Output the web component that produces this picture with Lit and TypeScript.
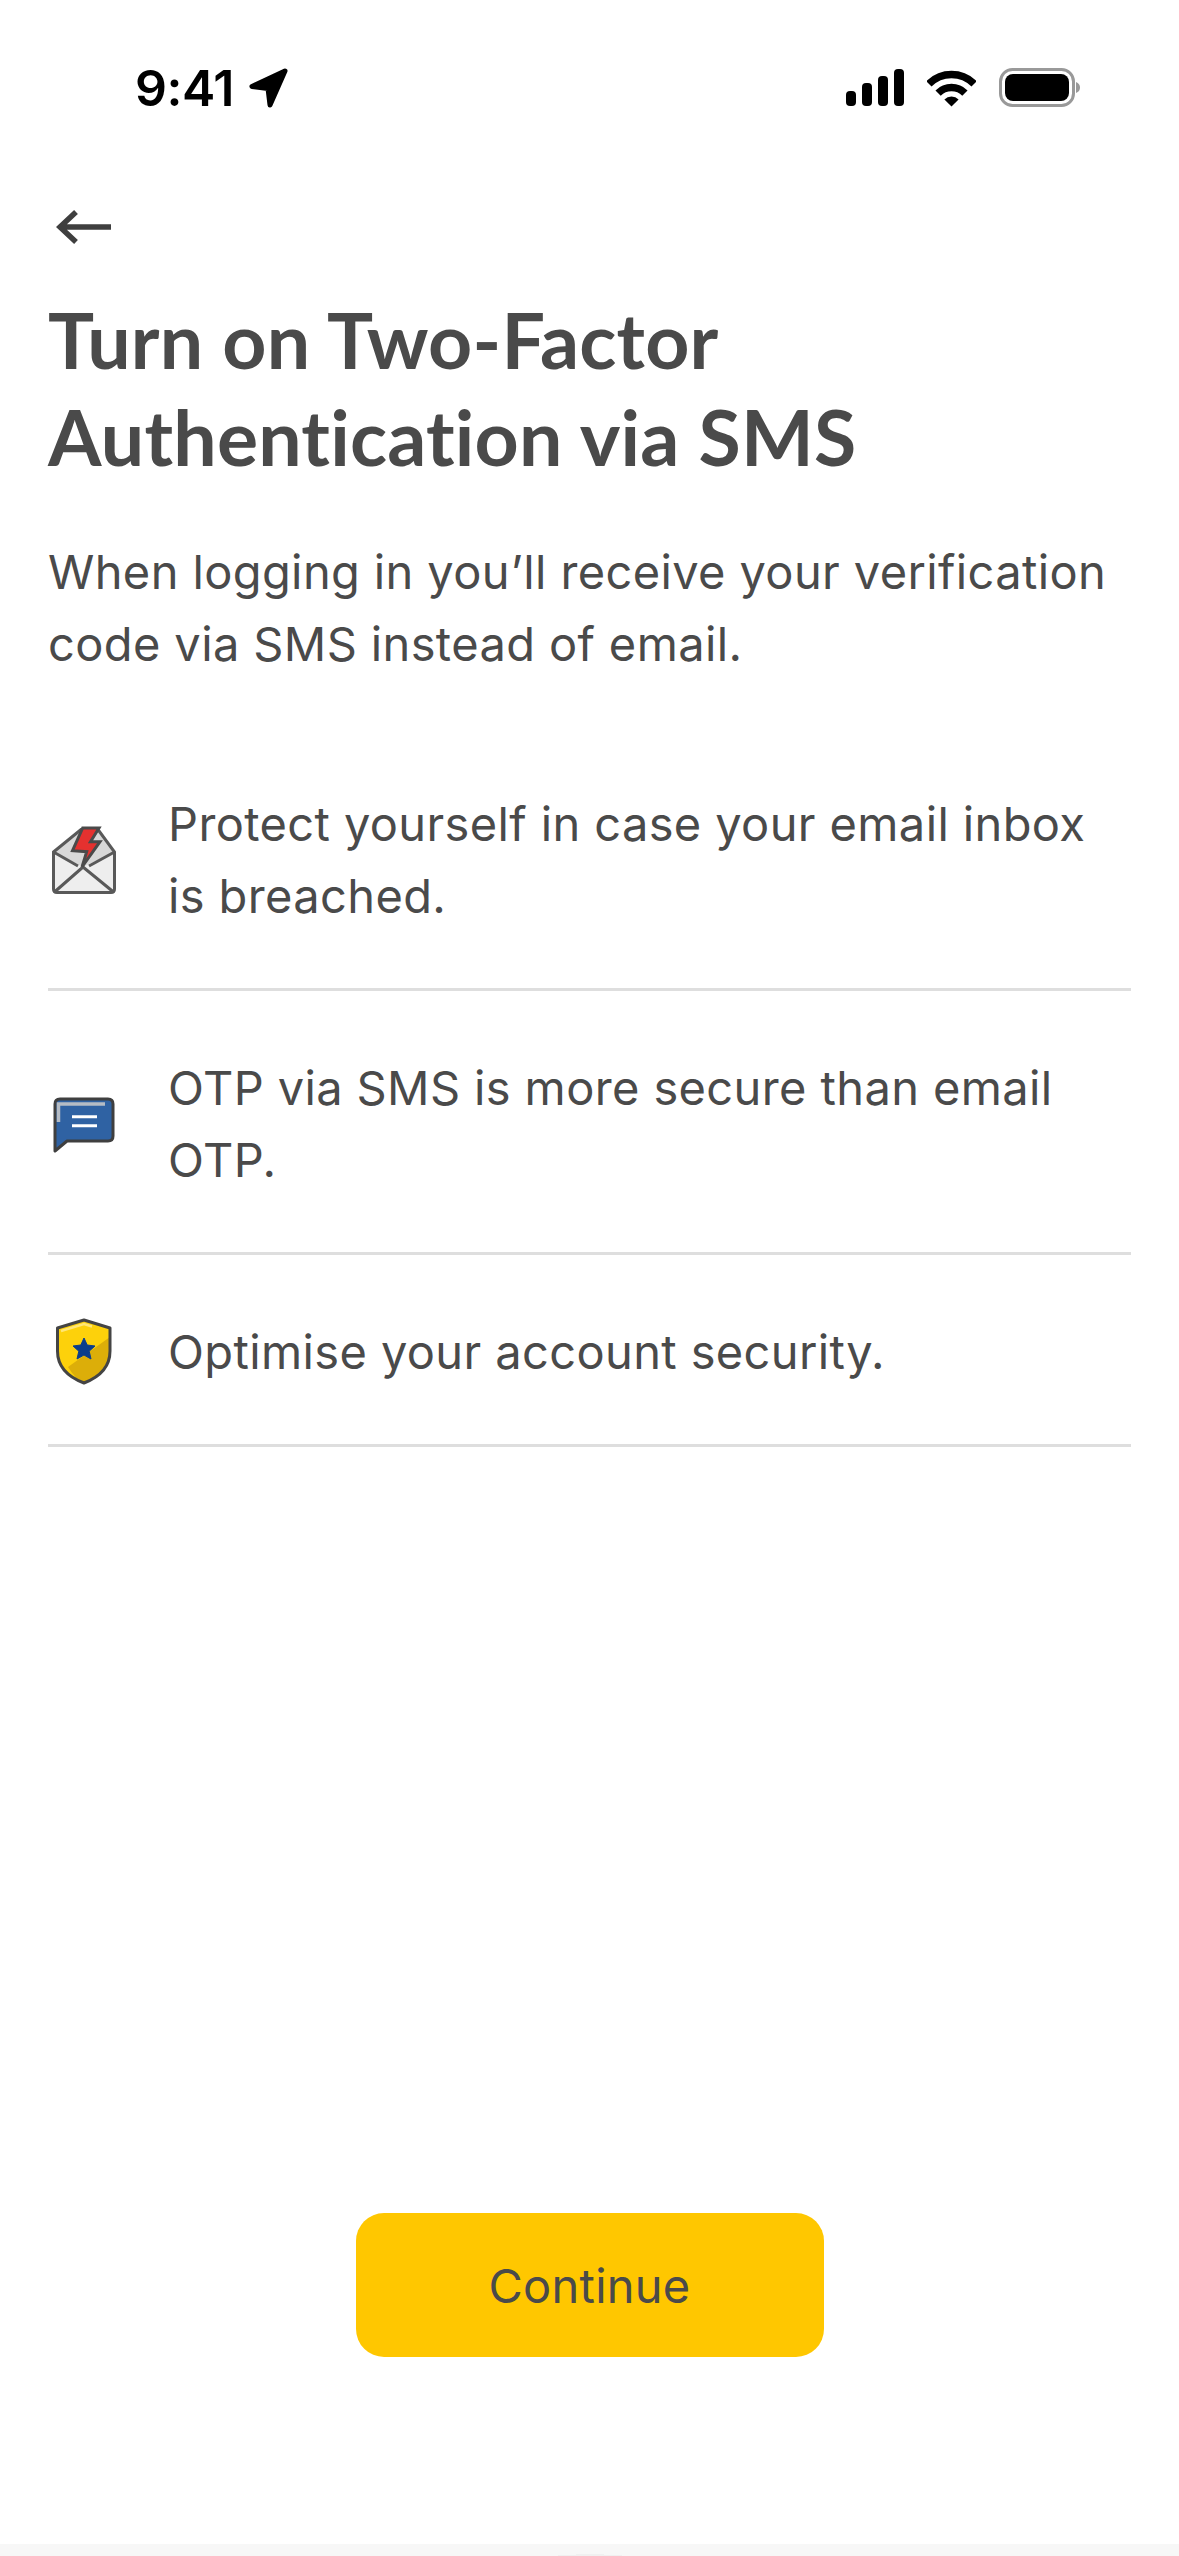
import { LitElement, html, css } from "lit";
import { customElement } from "lit/decorators.js";

@customElement("app-root")
export class AppRoot extends LitElement {
  static styles = css`
    :host { display: block; width: 1179px; height: 2556px; background: #fff; overflow: hidden; color: #4a4a4a; font-family: Inter, "Liberation Sans", sans-serif; }
    .page { height: 2556px; display: flex; flex-direction: column; }
    .status { height: 176px; flex: none; display: flex; justify-content: space-between; align-items: flex-start; padding: 60px 98px 0 135px; box-sizing: border-box; }
    .time { display: flex; align-items: center; gap: 14px; font-size: 50px; line-height: 56px; font-weight: 600; color: #000; letter-spacing: -0.5px; }
    .sys { display: flex; align-items: center; gap: 23px; margin-top: 8px; }
    svg { display: block; flex: none; }
    .main { flex: 1; padding: 0 48px; display: flex; flex-direction: column; }
    .back { height: 48px; margin-top: 34px; margin-left: 8px; }
    h1 { margin: 33px 0 0; font-family: Lato, sans-serif; font-weight: 700; font-size: 77px; line-height: 97px; color: #4a4a4a; font-variant-ligatures: none; letter-spacing: 0.2px; }
    .sub { margin: 51px 0 0; font-size: 47px; line-height: 72px; letter-spacing: 0.38px; }
    .list { margin-top: 82px; }
    .row { display: flex; align-items: center; border-bottom: 3px solid #dedede; padding: 26px 0 56px; gap: 52px; }
    .row + .row { padding-top: 61px; }
    .row svg { margin-left: 4px; }
    .row span { font-size: 47px; line-height: 72px; flex: 1; letter-spacing: 0.38px; }
    .cta { align-self: center; width: 468px; height: 144px; margin-bottom: 187px; background: #ffc700; border-radius: 28px; display: flex; align-items: center; justify-content: center; font-size: 47px; letter-spacing: 0.25px; }
    .spacer { flex: 1; }
    .home { height: 12px; flex: none; background: #f7f7f7; display: flex; align-items: flex-end; justify-content: center; }
    .pill { width: 64px; height: 1px; background: #f0f0f0; position: relative; }
    .pill::before { content: ""; position: absolute; left: 18px; top: -1px; width: 28px; height: 1px; background: #f0f0f0; }
  `;

  render() {
    return html`<div class="page">
      <div class="status">
        <div class="time">9:41
          <svg width="42" height="42" viewBox="0 0 42 42"><path d="M37 4 4 19.500 20 21.500 22 38Z" fill="#000" stroke="#000" stroke-width="5" stroke-linejoin="round"/></svg>
        </div>
        <div class="sys">
          <svg width="58" height="38" viewBox="0 0 58 38"><rect x="0" y="22" width="10" height="15" rx="4"/><rect x="16" y="14" width="10" height="23" rx="4"/><rect x="32" y="7" width="10" height="30" rx="4"/><rect x="48" y="0" width="10" height="37" rx="4"/></svg>
          <svg width="49" height="38" viewBox="0 0 49 38"><path d="M1.900 14.900A32 32 0 0 1 47.100 14.900M11.100 24.100A19 19 0 0 1 37.900 24.100" fill="none" stroke="#000" stroke-width="7.500"/><path d="M24.500 37.500 17.400 30.400A10 10 0 0 1 31.600 30.400Z"/></svg>
          <svg width="82" height="40" viewBox="0 0 82 40"><rect x="1.500" y="1.500" width="73" height="36" rx="12" fill="none" stroke="#999" stroke-width="3"/><rect x="6" y="6" width="64" height="27" rx="8"/><path d="M77 14Q81 15.500 81 19.500T77 25Z" fill="#999"/></svg>
        </div>
      </div>
      <div class="main">
        <div class="back"><svg width="56" height="34" viewBox="0 0 56 34"><path d="M55 17H5M20 2 4 17 20 32" fill="none" stroke="#3f3f3f" stroke-width="5.500"/></svg></div>
        <h1>Turn on Two-Factor<br>Authentication via SMS</h1>
        <p class="sub">When logging in you’ll receive your verification<br>code via SMS instead of email.</p>
        <div class="list">
          <div class="row">
            <svg width="64" height="68" viewBox="0 0 64 68"><path d="M1.500 26V63Q1.500 66.500 5 66.500H59Q62.500 66.500 62.500 63V26L31 41Z" fill="#eeeeee"/><path d="M1.500 26 29 3.500H46L62.500 26 31 41Z" fill="#d8d8d8"/><path d="M1.500 26 29 3.500H46L62.500 26V63Q62.500 66.500 59 66.500H5Q1.500 66.500 1.500 63ZM1.500 26 26 40M62.500 26 37 40M2.500 66 31 41 61.500 66" fill="none" stroke="#595959" stroke-width="3"/><path d="M30.700 2H47L38.500 15.700H48L30 41 34.700 25.700 20.500 24.700Z" fill="#e5312f" stroke="#4a4a4a" stroke-width="3"/></svg>
            <span>Protect yourself in case your email inbox<br>is breached.</span>
          </div>
          <div class="row">
            <svg width="64" height="58" viewBox="0 0 64 58"><path d="M3 9Q3 4 8 4H56Q61 4 61 9V41Q61 46 56 46H15L3 56Z" fill="#2f62a3" stroke="#3f3f3f" stroke-width="3" stroke-linejoin="round"/><path d="M53 9H6.500V27" stroke="#b5bcc5" stroke-width="3.500" fill="none"/><path d="M20 21.700H45M20 30.700H45" stroke="#fff" stroke-width="3"/></svg>
            <span>OTP via SMS is more secure than email<br>OTP.</span>
          </div>
          <div class="row">
            <svg width="64" height="68" viewBox="0 0 64 68"><path d="M5.500 10 32 2 58 10V33Q58 55 32 65 5.500 55 5.500 33Z" fill="#fdd10b"/><path d="M58 19V33Q58 55 32 65 24 62 16 49Z" fill="#dcae09"/><path d="M9 13 32 6 40 8.500" fill="none" stroke="#ffe676" stroke-width="2.500"/><path d="M5.500 10 32 2 58 10V33Q58 55 32 65 5.500 55 5.500 33Z" fill="none" stroke="#444" stroke-width="3" stroke-linejoin="round"/><path d="M32 20 35.200 27 43 28 37.200 33.200 39 41 32 37 25 41 26.800 33.200 21 28 28.800 27Z" fill="#0a3d8c" stroke="#0a3d8c" stroke-width="1" stroke-linejoin="round"/></svg>
            <span>Optimise your account security.</span>
          </div>
        </div>
        <div class="spacer"></div>
        <div class="cta">Continue</div>
      </div>
      <div class="home"><div class="pill"></div></div>
    </div>`;
  }
}
